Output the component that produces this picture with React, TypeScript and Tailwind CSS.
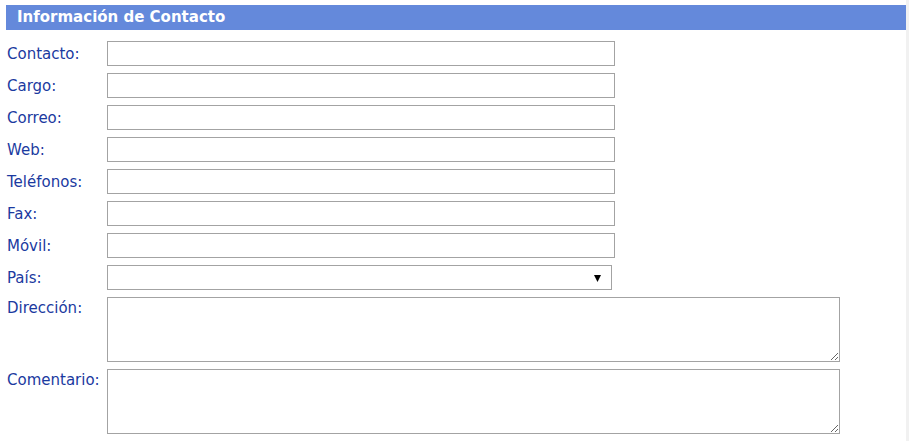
const fields = ['Contacto:', 'Cargo:', 'Correo:', 'Web:', 'Teléfonos:', 'Fax:', 'Móvil:'];

const labelCls = "w-[100px] shrink-0 text-[15px] leading-[20px] text-[#1b3a9f]";

export default function App() {
  return (
    <div className="w-[909px] h-[441px] flex bg-white overflow-hidden" style={{ fontFamily: 'Tahoma, "DejaVu Sans", sans-serif' }}>
      <div className="flex-1 pt-[5px]">
        {/* Header */}
        <div className="ml-[6px] h-[25px] bg-[#6489db] flex items-center pl-[11px]">
          <span className="text-white font-bold text-[15px] leading-none">Información de Contacto</span>
        </div>

        {/* Form */}
        <div className="mt-[11px] pl-[7px] flex flex-col gap-[7px]">
          {fields.map((f) => (
            <div key={f} className="flex items-center">
              <label className={labelCls}>{f}</label>
              <input type="text" className="w-[508px] h-[25px] border border-[#a3a3a3] bg-white outline-none" />
            </div>
          ))}

          <div className="flex items-center">
            <label className={labelCls}>País:</label>
            <div className="relative w-[505px] h-[25px] border border-[#a3a3a3] bg-white">
              <svg className="absolute right-[10px] top-[9px]" width="7" height="7" viewBox="0 0 7 7">
                <polygon points="0,0 7,0 3.5,7" fill="#000" />
              </svg>
            </div>
          </div>

          <div className="flex items-start">
            <label className={labelCls + " pt-[1px]"}>Dirección:</label>
            <textarea className="w-[733px] h-[65px] border border-[#a3a3a3] bg-white outline-none" />
          </div>

          <div className="flex items-start">
            <label className={labelCls + " pt-[1px]"}>Comentario:</label>
            <textarea className="w-[733px] h-[65px] border border-[#a3a3a3] bg-white outline-none" />
          </div>
        </div>
      </div>
      <div className="w-[3px] bg-[#f1f1f1]" />
    </div>
  );
}
